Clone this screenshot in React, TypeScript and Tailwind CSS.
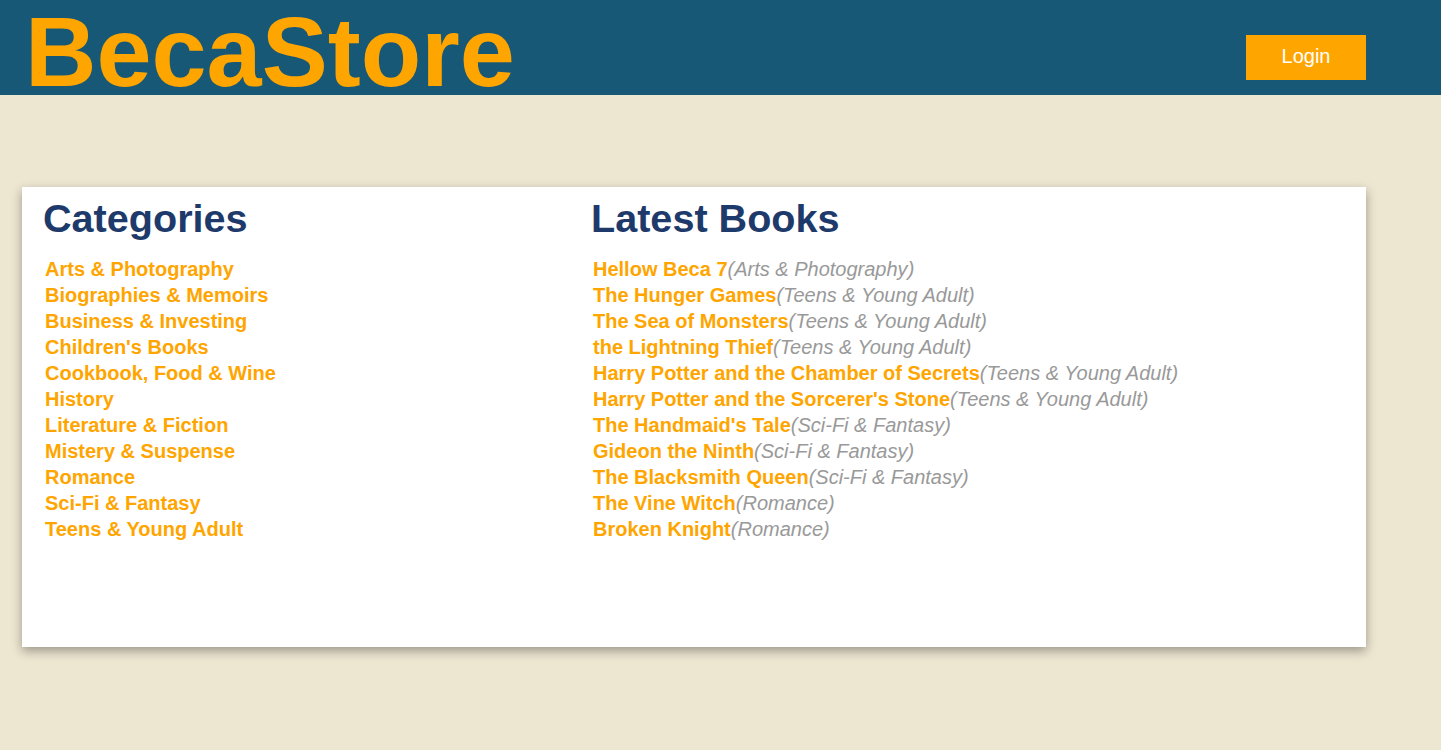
import React from 'react';

const categories = [
  'Arts & Photography',
  'Biographies & Memoirs',
  'Business & Investing',
  "Children's Books",
  'Cookbook, Food & Wine',
  'History',
  'Literature & Fiction',
  'Mistery & Suspense',
  'Romance',
  'Sci-Fi & Fantasy',
  'Teens & Young Adult',
];

const books = [
  { title: 'Hellow Beca 7', category: 'Arts & Photography' },
  { title: 'The Hunger Games', category: 'Teens & Young Adult' },
  { title: 'The Sea of Monsters', category: 'Teens & Young Adult' },
  { title: 'the Lightning Thief', category: 'Teens & Young Adult' },
  { title: 'Harry Potter and the Chamber of Secrets', category: 'Teens & Young Adult' },
  { title: "Harry Potter and the Sorcerer's Stone", category: 'Teens & Young Adult' },
  { title: "The Handmaid's Tale", category: 'Sci-Fi & Fantasy' },
  { title: 'Gideon the Ninth', category: 'Sci-Fi & Fantasy' },
  { title: 'The Blacksmith Queen', category: 'Sci-Fi & Fantasy' },
  { title: 'The Vine Witch', category: 'Romance' },
  { title: 'Broken Knight', category: 'Romance' },
];

export default function App() {
  return (
    <div className="min-h-[750px] bg-[#ede6d1] font-['Liberation_Sans',Arial,sans-serif]">
      <header className="flex h-[95px] items-start justify-between bg-[#185877] pl-[25px] pr-[75px]">
        <h1 className="mt-[4px] text-[99px] font-bold leading-[95px] text-[#ffa500]">BecaStore</h1>
        <button className="mt-[35px] h-[45px] w-[120px] bg-[#ffa500] pb-[3px] text-[20px] text-white">
          Login
        </button>
      </header>

      <main className="ml-[22px] mt-[92px] flex h-[460px] w-[1344px] bg-white pl-[21px] pt-[2px] shadow-[0_4px_10px_rgba(0,0,0,0.35)]">
        <section className="w-[548px]">
          <h2 className="text-[39.6px] font-bold text-[#1e3a6b]">Categories</h2>
          <ul className="mt-[8px] pl-[2px]">
            {categories.map((c) => (
              <li key={c} className="text-[20px] font-bold leading-[26px] text-[#ffa500]">
                <a href="#">{c}</a>
              </li>
            ))}
          </ul>
        </section>
        <section>
          <h2 className="text-[39.6px] font-bold text-[#1e3a6b]">Latest Books</h2>
          <ul className="mt-[8px] pl-[2px]">
            {books.map((b) => (
              <li key={b.title} className="text-[20px] leading-[26px]">
                <a href="#" className="font-bold text-[#ffa500]">{b.title}</a>
                <span className="italic text-[#999999]">({b.category})</span>
              </li>
            ))}
          </ul>
        </section>
      </main>
    </div>
  );
}
